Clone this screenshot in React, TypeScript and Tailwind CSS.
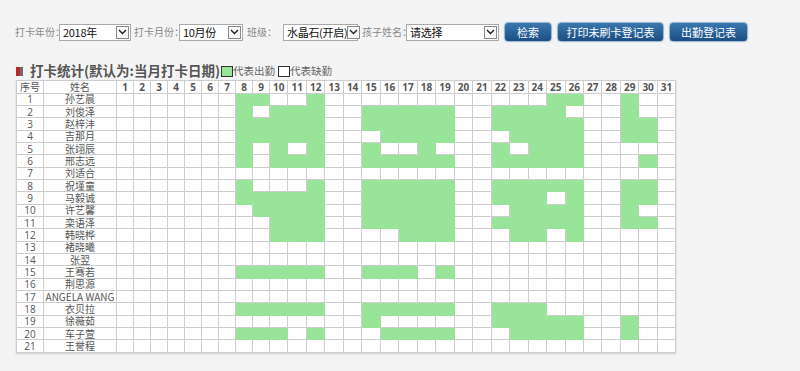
import React from "react";

interface Student {
  no: number;
  name: string;
  days: number[];
}

const r = (a: number, b: number) => Array.from({ length: b - a + 1 }, (_, i) => a + i);

const STUDENTS: Student[] = [
  { no: 1, name: "孙艺晨", days: [8, 9, 12, 25, 26, 29] },
  { no: 2, name: "刘俊泽", days: [8, 10, 11, 12, ...r(15, 19), ...r(22, 25), 29] },
  { no: 3, name: "赵梓沣", days: [...r(8, 12), ...r(15, 19), ...r(22, 26), 29, 30] },
  { no: 4, name: "吉那月", days: [...r(8, 12), ...r(16, 19), ...r(23, 26), 29, 30] },
  { no: 5, name: "张翊辰", days: [8, 10, 12, 15, 18, 22, 24, 25, 26] },
  { no: 6, name: "邢志远", days: [8, 10, 11, 12, ...r(15, 19), ...r(22, 26), 30] },
  { no: 7, name: "刘适合", days: [] },
  { no: 8, name: "祝墐童", days: [8, 12, ...r(15, 19), ...r(22, 26), 29, 30] },
  { no: 9, name: "马毅诚", days: [...r(8, 12), ...r(15, 19), 22, 23, 24, 26, 29, 30] },
  { no: 10, name: "许艺馨", days: [...r(9, 12), ...r(15, 19), ...r(23, 26), 29] },
  { no: 11, name: "栾语泽", days: [...r(10, 12), ...r(15, 19), ...r(22, 26), 29, 30] },
  { no: 12, name: "韩晓桦", days: [...r(10, 12), ...r(17, 19), 23, 24, 26] },
  { no: 13, name: "褚晓曦", days: [] },
  { no: 14, name: "张翌", days: [] },
  { no: 15, name: "王骞若", days: [...r(8, 12), 15, 16, 17, 19] },
  { no: 16, name: "荆思源", days: [] },
  { no: 17, name: "ANGELA WANG", days: [] },
  { no: 18, name: "衣贝拉", days: [...r(8, 12), ...r(15, 19), 22, 23, 24] },
  { no: 19, name: "徐薇茹", days: [15, ...r(22, 26), 29] },
  { no: 20, name: "车子萱", days: [8, 9, 10, 12, ...r(16, 19), ...r(23, 26), 29] },
  { no: 21, name: "王誉程", days: [] },
];

const DAYS = r(1, 31);

function FakeSelect({ value, width }: { value: string; width: string }) {
  return (
    <div className={`${width} shrink-0 h-[17px] bg-white border border-[#a9a9a9] flex items-center justify-between pl-[3px] pr-[1px]`}>
      <span className="text-[11px] leading-none text-[#111] whitespace-nowrap tracking-[-0.3px]">{value}</span>
      <span className="shrink-0 w-[13px] h-[13px] border border-[#8a8a8a] bg-[#f7f7f7] flex items-center justify-center">
        <svg width="9" height="6" viewBox="0 0 9 6">
          <path d="M1 1 L4.5 4.5 L8 1" fill="none" stroke="#222" strokeWidth="1.4" />
        </svg>
      </span>
    </div>
  );
}

function BlueButton({ label, width }: { label: string; width: string }) {
  return (
    <button className={`${width} shrink-0 h-[20px] rounded-[4px] border border-[#9fb7cf] bg-gradient-to-b from-[#3a78b0] to-[#1c4f82] text-white text-[11px] leading-none whitespace-nowrap shadow-[0_0_0_1px_#e4ecf4]`}>
      {label}
    </button>
  );
}

function Label({ text, width }: { text: string; width: string }) {
  return <span className={`${width} shrink-0 whitespace-nowrap text-[10px] leading-none text-[#888]`}>{text}</span>;
}

export default function App() {
  return (
    <div className="w-[800px] h-[371px] overflow-hidden bg-[#f4f4f4] font-['Noto_Sans_CJK_SC','Noto_Sans',sans-serif] text-[#555]">
      {/* search bar */}
      <div className="flex items-center pt-[22px] pl-[15px] h-[42px]">
        <Label text="打卡年份：" width="w-[44px]" />
        <FakeSelect value="2018年" width="w-[72px]" />
        <span className="w-[3px] shrink-0" />
        <Label text="打卡月份：" width="w-[45px]" />
        <FakeSelect value="10月份" width="w-[64px]" />
        <span className="w-[4px] shrink-0" />
        <Label text="班级：" width="w-[36px]" />
        <FakeSelect value="水晶石(开启)" width="w-[75px]" />
        <span className="w-[4px] shrink-0" />
        <Label text="孩子姓名：" width="w-[44px]" />
        <FakeSelect value="请选择" width="w-[93px]" />
        <div className="ml-[5px] flex gap-[5px]">
          <BlueButton label="检索" width="w-[48px]" />
          <BlueButton label="打印未刷卡登记表" width="w-[107px]" />
          <BlueButton label="出勤登记表" width="w-[79px]" />
        </div>
      </div>

      {/* title + legend */}
      <div className="flex items-center pl-[16px] mt-[22px] h-[14px]">
        <span className="flex h-[9px]">
          <span className="w-[4px] bg-[#c0272d]" />
          <span className="w-[3px] bg-[#6b6b6b]" />
        </span>
        <span className="ml-[7px] text-[13.5px] font-bold text-[#555] leading-none whitespace-nowrap">打卡统计(默认为:当月打卡日期)</span>
        <span className="ml-[1px] w-[12px] h-[11px] bg-[#98e498] border border-[#333]" />
        <span className="text-[10.5px] text-[#666] leading-none whitespace-nowrap">代表出勤</span>
        <span className="ml-[3px] w-[12px] h-[11px] bg-white border border-[#333]" />
        <span className="text-[10.5px] text-[#666] leading-none whitespace-nowrap">代表缺勤</span>
      </div>

      {/* attendance grid */}
      <div className="mt-[2px] ml-[16px] w-fit grid gap-px p-px bg-[#cdcdcd] shadow-[0_1px_2px_rgba(0,0,0,0.15)] grid-cols-[26px_72px_repeat(9,16px)_repeat(22,17.47px)] grid-rows-[11.7px_repeat(21,11.33px)]">
        <div className="bg-white flex items-center justify-center text-[10px] leading-none">序号</div>
        <div className="bg-white flex items-center justify-center text-[10px] leading-none">姓名</div>
        {DAYS.map((d) => (
          <div key={`h${d}`} className="bg-white flex items-center justify-center text-[10px] font-bold leading-none font-['Open_Sans',sans-serif] text-[#555]">
            {d}
          </div>
        ))}
        {STUDENTS.map((s) => (
          <React.Fragment key={s.no}>
            <div className="bg-white flex items-center justify-center text-[10px] leading-none font-['Open_Sans',sans-serif]">{s.no}</div>
            <div className="bg-white flex items-center justify-center text-[10px] leading-none whitespace-nowrap">{s.name}</div>
            {DAYS.map((d) =>
              s.days.includes(d) ? (
                <div key={d} className="bg-[#98e498] shadow-[1px_1px_0_0_#98e498]" />
              ) : (
                <div key={d} className="bg-white" />
              )
            )}
          </React.Fragment>
        ))}
      </div>
    </div>
  );
}
